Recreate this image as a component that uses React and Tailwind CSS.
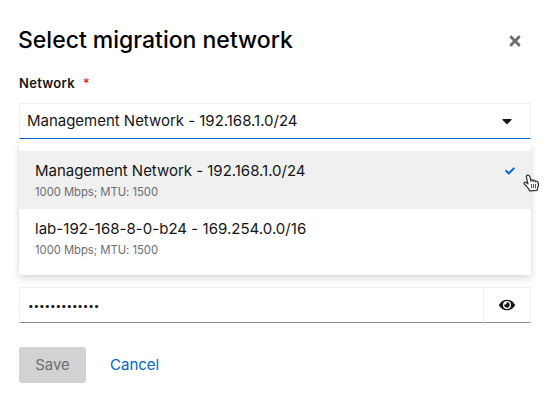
import { FaTimes, FaCaretDown, FaCheck, FaEye } from "react-icons/fa";

const networks = [
  { name: "Management Network - 192.168.1.0/24", detail: "1000 Mbps; MTU: 1500", selected: true },
  { name: "lab-192-168-8-0-b24 - 169.254.0.0/16", detail: "1000 Mbps; MTU: 1500", selected: false },
];

function HandCursor() {
  return (
    <svg className="absolute left-[523px] top-[174px]" width="17" height="18" viewBox="0 0 17 18" fill="none">
      <path
        d="M4.6 1.1C5.8.8 6.5 1.6 6.8 2.7L7.8 6.1C8.6 5.5 9.7 5.7 10.1 6.6C11 6 12.1 6.3 12.4 7.2C13.5 6.8 14.9 7.4 15.1 8.5C15.6 10.2 15.5 11.4 14.9 13L14.1 16.3L6.6 16.8C6.2 15 4.7 13.7 3.5 12.3L1.2 9.9C.6 8.8 1.7 7.7 2.9 8.5L4.9 9.8L3.4 3.2C3.2 2.2 3.6 1.4 4.6 1.1Z"
        fill="#fff"
        stroke="#333"
        strokeWidth="1.25"
        strokeLinejoin="round"
      />
      <path d="M7.8 6V8M10.1 6.8V8.3M12.4 7.4V8.6" stroke="#444" strokeWidth="1" />
      <path d="M8.5 10V14.2M10.5 10V14.2M12.5 10V14.2" stroke="#555" strokeWidth="1" />
    </svg>
  );
}

export default function App() {
  return (
    <main className="relative h-[407px] w-[555px] overflow-hidden bg-white px-[19px] pt-6 font-['Inter',sans-serif] text-[#151515]">
      <header className="flex h-8 w-[512px] items-center justify-between">
        <h1 className="-ml-px whitespace-nowrap text-[23px] font-medium leading-8 tracking-[-0.01px] text-black">Select migration network</h1>
        <button aria-label="Close" className="mr-2 mt-[2px] text-[#6a6e73]"><FaTimes size={16} /></button>
      </header>
      <label className="mt-[17px] flex h-5 items-center text-[13px] font-semibold leading-5 tracking-[0.3px]">
        Network<span className="ml-2 font-normal text-[#c9190b]">*</span>
      </label>
      <div className="relative mt-[10px] w-[512px]">
        <button className="flex h-9 w-full items-center justify-between border border-[#f0f0f0] border-b-[#06c] pl-[7px] pr-[15px] text-[15px] leading-6">
          <span className="whitespace-nowrap tracking-[-0.02px]">{networks[0].name}</span>
          <FaCaretDown size={16} />
        </button>
        <ul className="absolute left-0 top-10 h-[132px] w-full bg-white py-2 shadow-[0_4px_8px_0_rgba(3,3,3,0.12),0_0_4px_0_rgba(3,3,3,0.06)]">
          {networks.map((n) => (
            <li key={n.name} className={n.selected ? "h-[58px] bg-[#f0f0f0] px-4 pt-2 tracking-[-0.02px]" : "h-[58px] px-4 pt-2 tracking-[0.03px]"}>
              <div className="flex h-6 items-center justify-between text-[15px] leading-6">
                <span className="whitespace-nowrap">{n.name}</span>
                {n.selected && <FaCheck size={10} className="text-[#06c]" />}
              </div>
              <div className="text-[11.3px] leading-[18px] tracking-[-0.04px] text-[#6a6e73]">{n.detail}</div>
            </li>
          ))}
        </ul>
      </div>
      <div className="mt-[148px] flex h-9 w-[512px]">
        <div className="flex flex-1 items-center border border-[#f0f0f0] border-b-[#8a8d90] pb-px pl-2 text-[10px] leading-none tracking-[-0.14px]">
          •••••••••••••
        </div>
        <button aria-label="Show passphrase" className="flex w-[47px] items-center justify-center border border-l-0 border-[#f0f0f0] border-b-[#8a8d90]">
          <FaEye size={16} />
        </button>
      </div>
      <footer className="mt-6 flex items-center text-[15px] leading-6">
        <button className="h-9 w-[67px] rounded-[3px] bg-[#d2d2d2] text-[#6a6e73]">Save</button>
        <button className="ml-6 text-[#06c]">Cancel</button>
      </footer>
      <HandCursor />
    </main>
  );
}
